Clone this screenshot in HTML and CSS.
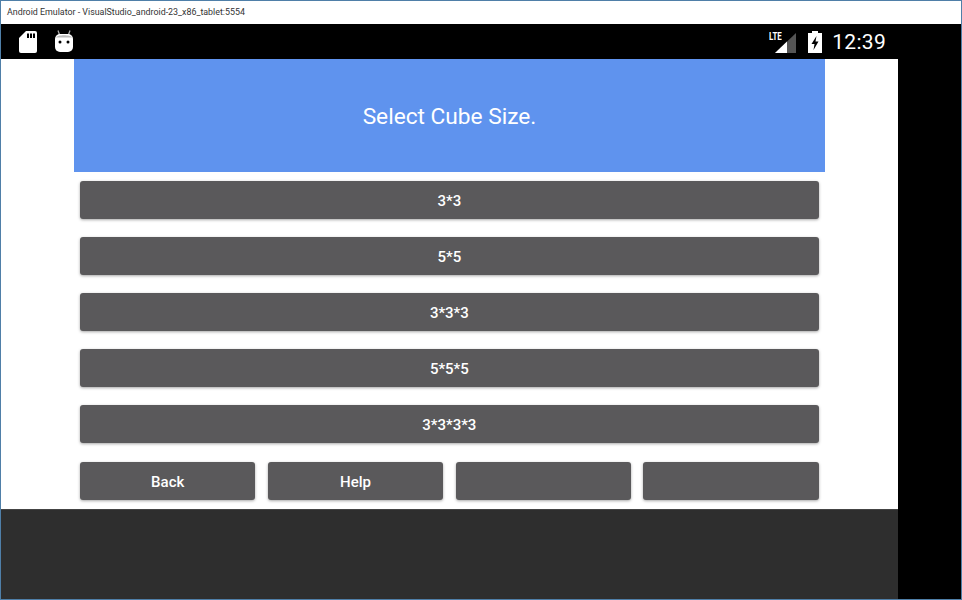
FILE: index.html
```html
<!DOCTYPE html>
<html lang="en">
<head>
<meta charset="utf-8">
<title>Android Emulator</title>
<link rel="stylesheet" href="styles.css">
</head>
<body>
<div class="window">
  <div class="titlebar">Android Emulator - VisualStudio_android-23_x86_tablet:5554</div>
  <div class="device">
    <div class="screen">
      <div class="statusbar">
        <div class="status-left">
          <svg class="ic-sd" viewBox="0 0 18 22"><path fill="#fff" d="M7 0H16a2 2 0 0 1 2 2V20a2 2 0 0 1-2 2H2a2 2 0 0 1-2-2V7Z"/><path fill="#000" d="M8 2.500h2v4.500H8ZM11 2.500h2v4.500h-2ZM14 2.500h2v4.500h-2Z"/></svg>
          <svg class="ic-bot" viewBox="0 0 18 22"><path fill="none" stroke="#aaa" stroke-width="1.300" d="M3 0.500 5 6M15 0.500 13 6"/><path fill="#fff" d="M5 4H13a5 5 0 0 1 5 5V17a5 5 0 0 1-5 5H5a5 5 0 0 1-5-5V9a5 5 0 0 1 5-5Z"/><path fill="#bbb" d="M1 7.500C2 4.500 16 4.500 17 7.500Z"/><circle cx="5" cy="12" r="1.500" fill="#000"/><circle cx="13" cy="12" r="1.500" fill="#000"/></svg>
        </div>
        <div class="status-right">
          <div class="signal">
            <svg class="ic-signal" viewBox="0 0 21 20"><path fill="#555" d="M21 0V20H0Z"/><path fill="#fff" d="M12 8.600V20H0Z"/></svg>
            <span class="lte">LTE</span>
          </div>
          <svg class="ic-batt" viewBox="0 0 14 22"><path fill="#fff" d="M4 0H10V2H14V22H0V2H4Z"/><path fill="#000" d="M8.500 5 3.500 13H6.500L5.500 19 10.500 10.500H7.500Z"/></svg>
          <span class="clock">12:39</span>
        </div>
      </div>
      <div class="app">
        <div class="panel">
          <div class="heading">Select Cube Size.</div>
          <div class="list">
            <button class="btn">3*3</button>
            <button class="btn">5*5</button>
            <button class="btn">3*3*3</button>
            <button class="btn">5*5*5</button>
            <button class="btn">3*3*3*3</button>
            <div class="actions">
              <button class="btn">Back</button>
              <button class="btn">Help</button>
              <button class="btn"></button>
              <button class="btn"></button>
            </div>
          </div>
        </div>
      </div>
      <div class="navbar"></div>
    </div>
    <div class="side"></div>
  </div>
</div>
</body>
</html>
```
FILE: styles.css
```css
* { box-sizing: border-box; }
html, body { margin: 0; padding: 0; }
body { width: 962px; height: 600px; overflow: hidden; font-family: Roboto, sans-serif; }
.window { width: 962px; height: 600px; border: 1px solid #4f7fa8; display: flex; flex-direction: column; background: #000; }
.titlebar { height: 23px; flex: none; background: #fff; color: #333; font: 8.870px/22px Roboto, sans-serif; padding-left: 6px; }
.device { flex: 1; display: flex; min-height: 0; }
.screen { width: 897px; flex: none; display: flex; flex-direction: column; }
.side { flex: 1; background: #000; }
.statusbar { height: 35px; flex: none; background: #000; display: flex; justify-content: space-between; align-items: center; padding: 0 12px 0 18px; }
.status-left { display: flex; gap: 18px; align-items: center; }
.ic-sd { width: 18px; height: 22px; display: block; }
.ic-bot { width: 18px; height: 22px; display: block; margin-top: -2px; }
.status-right { display: flex; align-items: center; }
.signal { position: relative; width: 28px; height: 24px; }
.lte { position: absolute; left: 1px; top: 1px; color: #fff; font: 700 11px/12px Roboto, sans-serif; transform: scaleX(.72); transform-origin: left; }
.ic-signal { position: absolute; right: 0; bottom: 1px; width: 21px; height: 20px; display: block; }
.ic-batt { width: 14px; height: 22px; display: block; margin-left: 12px; }
.clock { color: #fff; font: 400 21px/28px Roboto, sans-serif; margin-left: 10px; letter-spacing: .3px; }
.app { height: 450px; flex: none; background: #fff; padding-left: 73px; }
.panel { width: 751px; }
.heading { height: 113px; background: #5f93ee; color: #fff; font: 400 22.700px/115px Roboto, sans-serif; text-align: center; }
.list { padding: 9px 6.300px 0 6px; display: flex; flex-direction: column; gap: 18px; }
.btn { height: 38px; width: 100%; border: 0; padding: 2px 0 0; border-radius: 3px; background: #5a595b; color: #fff; font: 500 15px/36px Roboto, sans-serif; box-shadow: 0 1px 3px rgba(0,0,0,.35); display: block; }
.actions { display: flex; gap: 12.400px; margin-top: 1px; }
.actions .btn { flex: 1; width: auto; }
.navbar { flex: 1; background: #2e2e2e; border-top: 1px solid #444; }
```
